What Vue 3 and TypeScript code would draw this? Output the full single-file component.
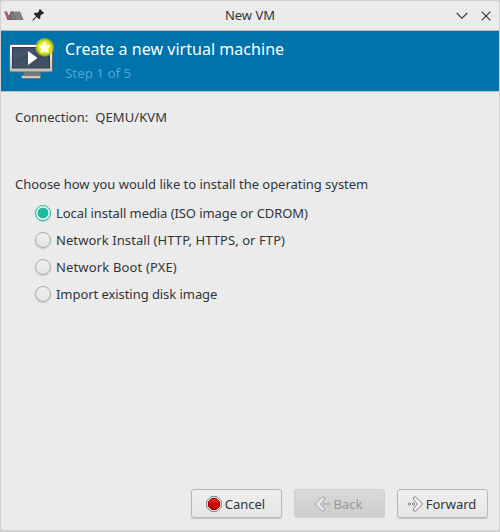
<script setup lang="ts">
import { ref } from 'vue'

interface InstallOption {
  id: string
  label: string
}

const options: InstallOption[] = [
  { id: 'local', label: 'Local install media (ISO image or CDROM)' },
  { id: 'network', label: 'Network Install (HTTP, HTTPS, or FTP)' },
  { id: 'pxe', label: 'Network Boot (PXE)' },
  { id: 'import', label: 'Import existing disk image' },
]
const selected = ref<string>('local')
</script>

<template>
  <div class="window">
    <header class="titlebar">
      <svg class="app-icon" width="20" height="10" viewBox="0 0 20 10">
        <path d="M0 .5H3L5 5L6.500 .5H9L7 9H3.500Z" fill="#984c5c" />
        <path d="M7.500 .5H10L13 9H5.500L6 6Z" fill="#667171" />
        <path d="M10.500 .5H12.800L15.800 9H13.500ZM13.500 .5H16L19.500 9H16.500Z" fill="#626c6b" />
        <path d="M10 1H15.500L19 9H12.500Z" fill="#626c6b" opacity=".6" />
        <path d="M1.500 1L5 8M7.500 2L10 8M11.500 1L14.500 8.500M14.500 1L17.500 8.500" fill="none" stroke="#a9b5b0" stroke-width=".6" />
      </svg>
      <svg class="pin-icon" width="12" height="12" viewBox="0 0 12 12">
        <path d="M8 0L12 4L11 5.200L10 4.900L8.200 6.900L8.500 9L7.300 10.200L4.700 7.900L1 11.700L.3 11L4.100 7.300L1.800 4.900L3 3.600L5.200 3.900L7.200 2L6.900 1.200Z" fill="#232629" />
      </svg>
      <h1 class="window-title">New VM</h1>
      <svg class="chevron" width="12" height="8" viewBox="0 0 12 8">
        <path d="M.7 1L6 6.300L11.300 1" fill="none" stroke="#31363b" stroke-width="1.150" />
      </svg>
      <svg class="close" width="10" height="10" viewBox="0 0 10 10">
        <path d="M.6 .6L9.400 9.400M9.400 .6L.6 9.400" fill="none" stroke="#31363b" stroke-width="1.150" />
      </svg>
    </header>

    <section class="banner">
      <svg class="monitor" width="48" height="48" viewBox="0 0 48 48">
        <defs>
          <linearGradient id="bezel" x2="0" y2="1"><stop stop-color="#fff" /><stop offset="1" stop-color="#bdbdba" /></linearGradient>
          <linearGradient id="screen" x2="0" y2="1"><stop stop-color="#35465f" /><stop offset="1" stop-color="#465365" /></linearGradient>
          <radialGradient id="glow"><stop offset=".35" stop-color="#f5f65c" /><stop offset=".65" stop-color="#d9e012" /><stop offset=".85" stop-color="#b9cf18" stop-opacity=".7" /><stop offset="1" stop-color="#a2c720" stop-opacity="0" /></radialGradient>
        </defs>
        <path d="M16 36H32L33 40H15Z" fill="#777b7b" />
        <rect x="13.500" y="39.500" width="19" height="3" rx="1" fill="#c7c7c4" stroke="#777" />
        <rect x="1.500" y="8.500" width="43" height="27.500" rx="1.500" fill="url(#bezel)" stroke="#656969" />
        <rect x="4.500" y="11.500" width="37" height="20.500" fill="url(#screen)" stroke="#303c4d" />
        <path d="M5 12H41V14Q25 17 5 23Z" fill="#fff" opacity=".06" />
        <path d="M20 15L29.500 22L20 29Z" fill="#fff" />
        <circle cx="36.700" cy="11.300" r="10" fill="url(#glow)" />
        <path d="M36.500 5L38.400 9.200L43 9.700L39.600 12.700L40.600 17.200L36.500 14.900L32.400 17.200L33.400 12.700L30 9.700L34.600 9.200Z" fill="#fffff4" />
      </svg>
      <div class="banner-copy">
        <h2>Create a new virtual machine</h2>
        <p>Step 1 of 5</p>
      </div>
    </section>

    <main class="page">
      <div class="connection"><span>Connection:</span><span class="connection-name">QEMU/KVM</span></div>
      <p class="question">Choose how you would like to install the operating system</p>
      <div class="options" role="radiogroup">
        <label v-for="option in options" :key="option.id" class="option" :class="option.id">
          <input v-model="selected" class="radio" type="radio" name="install" :value="option.id" />
          <span>{{ option.label }}</span>
        </label>
      </div>
    </main>

    <footer class="actions">
      <button class="button" type="button">
        <svg width="16" height="16" viewBox="0 0 16 16">
          <defs><linearGradient id="stop" x2="0" y2="1"><stop stop-color="#ef2929" /><stop offset=".6" stop-color="#cc0000" /><stop offset="1" stop-color="#b60000" /></linearGradient></defs>
          <path d="M5 .7H11L15.300 5V11L11 15.300H5L.7 11V5Z" fill="#eeeeec" stroke="#777b76" />
          <path d="M5.700 2.500H10.300L13.500 5.700V10.300L10.300 13.500H5.700L2.500 10.300V5.700Z" fill="url(#stop)" stroke="#a40000" />
        </svg>
        <span>Cancel</span>
      </button>
      <button class="button disabled" type="button" disabled>
        <svg width="16" height="16" viewBox="0 0 16 16">
          <g fill="#e8e8e8" stroke="#9b9b9b" stroke-width=".9">
            <path d="M7.500 .8Q9.900 .4 9.800 3L5.500 8L9.800 13Q9.900 15.600 7.500 15.200L.8 8.700V7.300Z" />
            <circle cx="9.500" cy="8" r="1.150" /><circle cx="13.500" cy="8" r="1.150" />
          </g>
        </svg>
        <span>Back</span>
      </button>
      <button class="button" type="button">
        <svg width="16" height="16" viewBox="0 0 16 16">
          <g fill="#f1f1f0" stroke="#777974" stroke-width=".9">
            <path d="M8.500 .8Q6.100 .4 6.200 3L10.500 8L6.200 13Q6.100 15.600 8.500 15.200L15.200 8.700V7.300Z" />
            <circle cx="6.500" cy="8" r="1.150" /><circle cx="2.500" cy="8" r="1.150" />
          </g>
        </svg>
        <span>Forward</span>
      </button>
    </footer>
  </div>
</template>

<style>
body {
  background: #d0d0d0;
}
</style>

<style scoped>
.window {
  box-sizing: border-box;
  display: flex;
  flex-direction: column;
  width: 500px;
  height: 530px;
  margin-bottom: 2px;
  border-top: 1px solid #d0d0d0;
  border-right: 1px solid #d2d2d2;
  border-left: 1px solid #d2d2d2;
  border-radius: 4px 4px 0 0;
  background: #ebebeb;
  color: #31363b;
  font: 13px/18px "Noto Sans", sans-serif;
}
.titlebar {
  display: flex;
  align-items: center;
  box-sizing: border-box;
  height: 30px;
  padding: 0 8px 0 3px;
  border-bottom: 1px solid #b7b7b7;
}
.app-icon {
  margin-top: 1px;
}
.pin-icon {
  margin: -1px 0 0 8px;
}
.window-title {
  flex: 1;
  margin: -1px 0 0;
  font-size: 13px;
  font-weight: 400;
  text-align: center;
}
.close {
  margin-left: 13px;
}
.banner {
  display: flex;
  box-sizing: border-box;
  height: 61px;
  padding: 5px 0 0 7px;
  border-bottom: 1px solid #bdbdbd;
  background: #0073aa;
}
.banner-copy {
  margin-left: 9px;
}
.banner h2 {
  margin: 2px 0 0;
  color: #fff;
  font-size: 16px;
  line-height: 22px;
  letter-spacing: 0.035px;
  font-weight: 400;
}
.banner p {
  margin: 4px 0 0;
  color: #4ca6d8;
  font-size: 13.333px;
}
.page {
  flex: 1;
  padding: 16px 14px 0;
}
.connection {
  display: flex;
  gap: 7px;
}
.connection-name {
  letter-spacing: 0.1px;
}
.question {
  margin: 49px 0 6px;
  letter-spacing: -0.025px;
}
.options {
  padding-left: 20px;
}
.option {
  display: flex;
  align-items: center;
  gap: 5px;
  height: 27px;
}
.option.local {
  letter-spacing: -0.075px;
}
.option.network {
  letter-spacing: 0.075px;
}
.option.pxe {
  letter-spacing: 0.15px;
}
.option.import {
  letter-spacing: -0.06px;
}
.radio {
  appearance: none;
  box-sizing: border-box;
  width: 16px;
  height: 16px;
  margin: 0;
  border: 1px solid #a9a9a9;
  border-radius: 50%;
  background: linear-gradient(#eee, #e5e5e5);
  box-shadow: 0 1px 1px #c7c7c7;
}
.radio:checked {
  border-color: #1abc9c;
  background: radial-gradient(circle, #1abc9c 5px, #eee 5.700px);
}
.actions {
  display: flex;
  justify-content: flex-end;
  gap: 12px;
  padding: 0 11px 12px 0;
}
.button {
  display: flex;
  align-items: center;
  justify-content: center;
  gap: 3px;
  box-sizing: border-box;
  width: 91px;
  height: 29px;
  padding: 0 2px 0 0;
  border: 1px solid #b8b8b8;
  border-radius: 3px;
  background: linear-gradient(#efefef, #e6e6e6);
  box-shadow: 0 1px 1px #c5c5c5;
  color: #31363b;
  font: inherit;
}
.button.disabled {
  border-color: #cfcfcf;
  background: linear-gradient(#d9d9d9, #cdcdcd);
  box-shadow: none;
  color: #989898;
}
</style>
